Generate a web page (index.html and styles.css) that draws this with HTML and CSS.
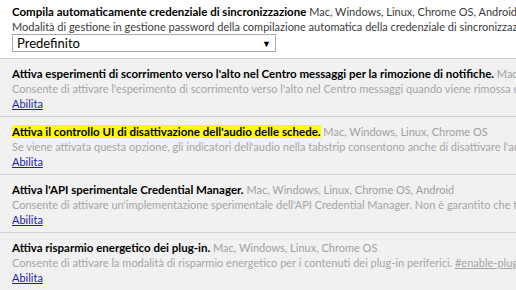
FILE: index.html
```html
<!DOCTYPE html>
<html lang="it">
<head>
    <meta charset="UTF-8">
    <title>Flags</title>
    <link rel="stylesheet" href="styles.css">
</head>
<body>
    <div class="flags">
        <div class="experiment current">
            <div class="title-line">
                <span class="name">Compila automaticamente credenziale di sincronizzazione</span>
                <span class="platforms">Mac, Windows, Linux, Chrome OS, Android</span>
            </div>
            <div class="description">Modalità di gestione in gestione password della compilazione automatica della credenziale di sincronizzazione</div>
            <div class="select">
                <span>Predefinito</span>
                <span class="arrow">&#9660;</span>
            </div>
        </div>

        <div class="experiment">
            <div class="title-line">
                <span class="name">Attiva esperimenti di scorrimento verso l'alto nel Centro messaggi per la rimozione di notifiche.</span>
                <span class="platforms">Mac, Windows, Linux, Chrome OS</span>
            </div>
            <div class="description">Consente di attivare l'esperimento di scorrimento verso l'alto nel Centro messaggi quando viene rimossa una notifica.</div>
            <a href="#" class="enable-link">Abilita</a>
        </div>

        <div class="experiment">
            <div class="title-line">
                <span class="name highlight">Attiva il controllo UI di disattivazione dell'audio delle schede.</span>
                <span class="platforms">Mac, Windows, Linux, Chrome OS</span>
            </div>
            <div class="description">Se viene attivata questa opzione, gli indicatori dell'audio nella tabstrip consentono anche di disattivare l'audio della scheda.</div>
            <a href="#" class="enable-link">Abilita</a>
        </div>

        <div class="experiment">
            <div class="title-line">
                <span class="name">Attiva l'API sperimentale Credential Manager.</span>
                <span class="platforms">Mac, Windows, Linux, Chrome OS, Android</span>
            </div>
            <div class="description">Consente di attivare un'implementazione sperimentale dell'API Credential Manager. Non è garantito che tutto funzioni.</div>
            <a href="#" class="enable-link">Abilita</a>
        </div>

        <div class="experiment">
            <div class="title-line">
                <span class="name">Attiva risparmio energetico dei plug-in.</span>
                <span class="platforms">Mac, Windows, Linux, Chrome OS</span>
            </div>
            <div class="description">Consente di attivare la modalità di risparmio energetico per i contenuti dei plug-in periferici. <a href="#" class="permalink">#enable-plugin-power-saver</a></div>
            <a href="#" class="enable-link">Abilita</a>
        </div>
    </div>
</body>
</html>
```

FILE: styles.css
```css
body {
    margin: 0;
    font-family: Lato, "Open Sans", Arial, sans-serif;
    font-size: 11px;
    line-height: 15px;
    color: #000;
    background-color: #fff;
    overflow: hidden;
}
.flags {
    width: 516px;
}
.experiment {
    padding: 7px 0 5px 12px;
    border-bottom: 1px solid #d4d4d4;
    background-color: #f1f1f1;
    white-space: nowrap;
    overflow: hidden;
}
.experiment.current {
    padding: 4px 0 6px 12px;
    background-color: #fff;
}
.name {
    font-weight: bold;
    font-size: 11.5px;
}
.highlight {
    background-color: #ffff00;
}
.platforms {
    color: #a0a0a0;
}
.description {
    color: #a5a5a5;
}
.current .platforms,
.current .description {
    color: #3c3c3c;
}
.enable-link {
    display: inline-block;
    color: #1c1ca8;
    text-decoration: underline;
}
.permalink {
    color: #a5a5a5;
}
.select {
    display: flex;
    justify-content: space-between;
    align-items: center;
    box-sizing: border-box;
    width: 264px;
    height: 18px;
    padding: 0 4px 0 4px;
    border: 1px solid #a9a9a9;
    font-size: 13px;
}
.arrow {
    font-size: 9px;
}
```
